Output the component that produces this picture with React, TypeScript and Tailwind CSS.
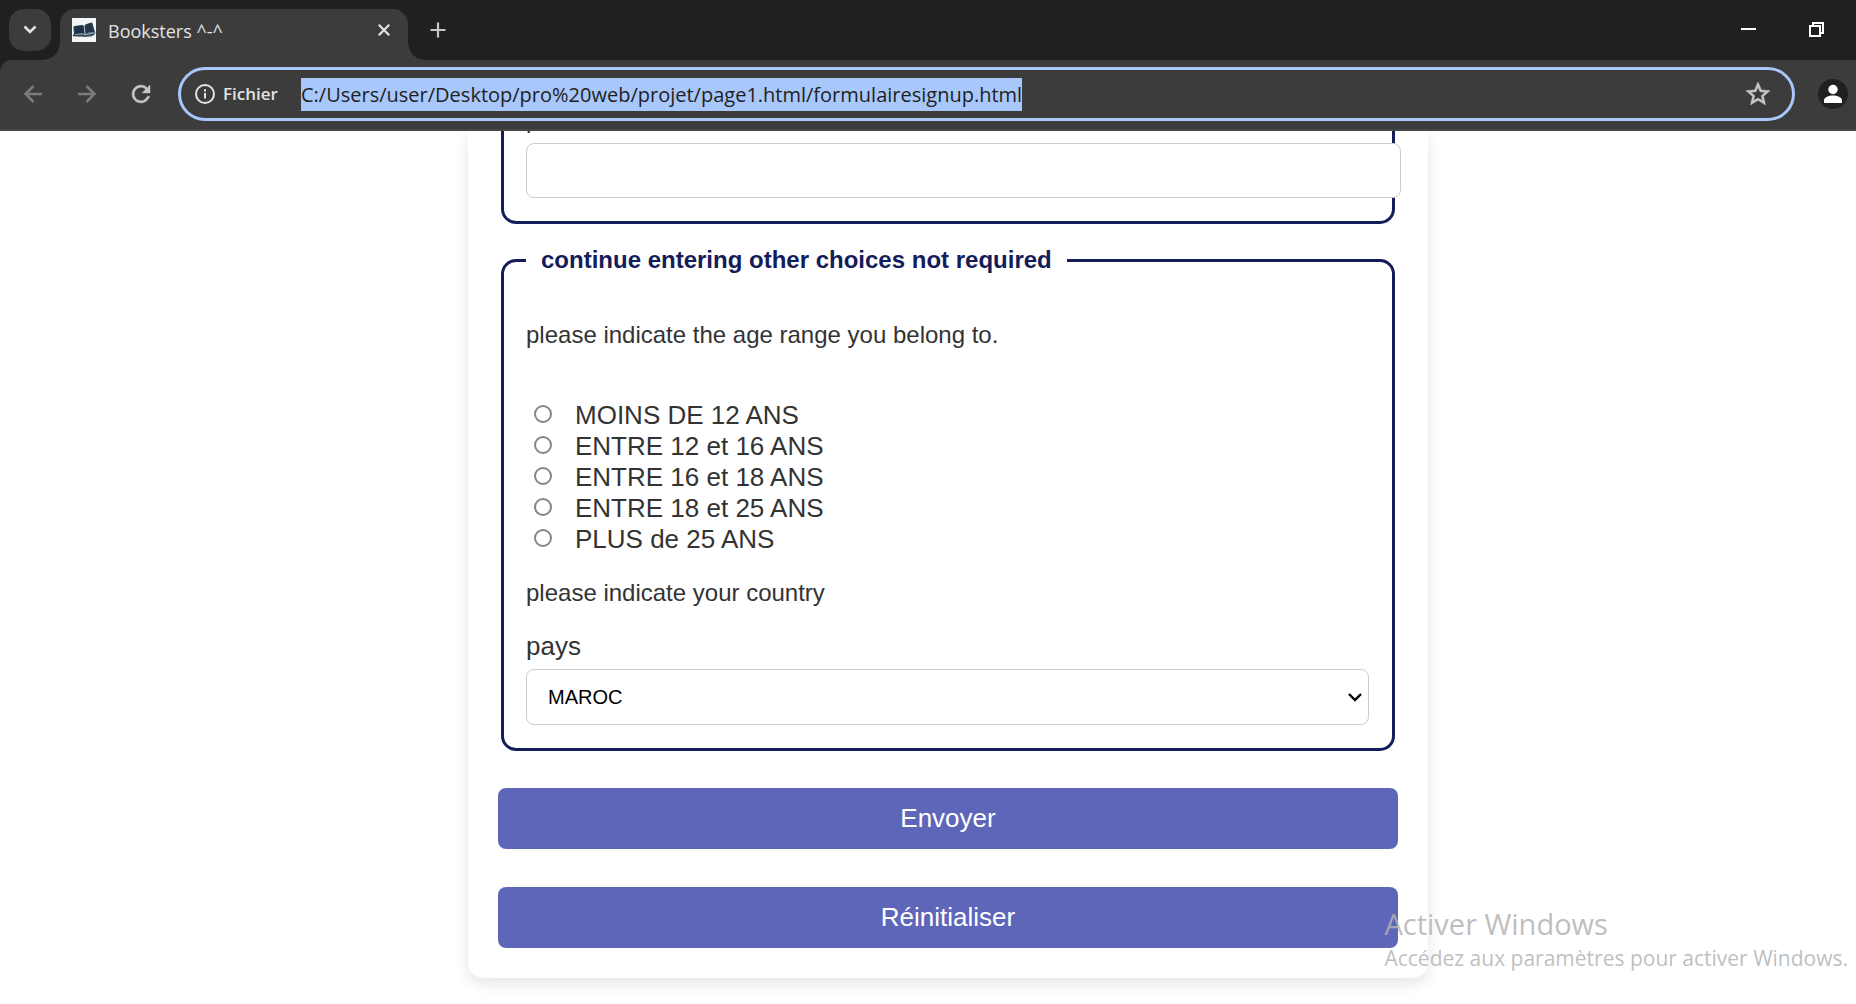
import React from "react";

const ageRanges = [
  "MOINS DE 12 ANS",
  "ENTRE 12 et 16 ANS",
  "ENTRE 16 et 18 ANS",
  "ENTRE 18 et 25 ANS",
  "PLUS de 25 ANS",
];

function BookIcon() {
  return (
    <svg viewBox="0 0 24 24" className="size-6 shrink-0" aria-hidden="true">
      <rect width="24" height="24" fill="#f4f5f6" />
      <path d="M1 8.5 L10 7.5 L12 9 L13 6.5 L20 4.5 L23.5 15 L20 18.5 L12 19 L3 18.5 L0.5 17.5 L2 15.5 Z" fill="#5a6c7a" />
      <path d="M2.5 8 L10.5 7 L12.2 8.5 L12.8 15.5 L10 15 L2 16.5 Z" fill="#1d3244" />
      <path d="M13 8 L15 6 L20 4.5 L22.5 14 L17 14 L13.2 16 Z" fill="#22384a" />
      <path d="M12.3 8.5 L13 16.5" stroke="#c9d2d9" strokeWidth="0.8" />
      <path d="M1 17.5 L10 16.8 L12.8 18 L22.5 16" stroke="#1b2e3e" strokeWidth="1" fill="none" />
      <path d="M3 16.6 L10 15.8 L13 17 L22 14.8" stroke="#cfd6dc" strokeWidth="0.6" fill="none" />
    </svg>
  );
}

function TabStrip() {
  return (
    <header className="flex h-[60px] items-start bg-[#1f2120] pt-[9px] pl-[9px]">
      <button
        type="button"
        aria-label="Search tabs"
        className="flex size-[42px] items-center justify-center rounded-[15px] bg-[#3c3c3c] text-[#e3e3e3]"
      >
        <svg viewBox="0 0 14 10" className="h-[10px] w-[14px]" fill="none" stroke="currentColor" strokeWidth="2.6">
          <path d="M1.5 1.5 L7 7 L12.5 1.5" />
        </svg>
      </button>
      <div className="relative ml-[9px] flex h-[51px] w-[348px] items-center rounded-t-[15px] bg-[#3c3c3c] pr-[18px] pb-[9px] pl-3">
        <span className="absolute bottom-0 -left-4 size-4 bg-[radial-gradient(circle_at_0_0,transparent_15px,#3c3c3c_16px)]" />
        <span className="absolute -right-4 bottom-0 size-4 bg-[radial-gradient(circle_at_100%_0,transparent_15px,#3c3c3c_16px)]" />
        <BookIcon />
        <span className="ml-3 flex-1 pt-[2px] text-[18px] leading-6 text-[#e3e3e3]">Booksters ^-^</span>
        <button type="button" aria-label="Close tab" className="text-[#e3e3e3]">
          <svg viewBox="0 0 12 12" className="size-3" fill="none" stroke="currentColor" strokeWidth="2.2">
            <path d="M0.7 0.7 L11.3 11.3 M11.3 0.7 L0.7 11.3" />
          </svg>
        </button>
      </div>
      <button type="button" aria-label="New tab" className="ml-[22px] flex h-[42px] items-center text-[#c7c7c7]">
        <svg viewBox="0 0 16 16" className="size-4" fill="none" stroke="currentColor" strokeWidth="2.2">
          <path d="M8 0.5 V15.5 M0.5 8 H15.5" />
        </svg>
      </button>
      <div className="mt-[13px] mr-8 ml-auto flex gap-[53px] text-white">
        <button type="button" aria-label="Minimize" className="flex size-[15px] items-center">
          <svg viewBox="0 0 15 15" className="size-[15px]" fill="currentColor">
            <rect y="6" width="15" height="2" />
          </svg>
        </button>
        <button type="button" aria-label="Restore" className="size-[15px]">
          <svg viewBox="0 0 15 15" className="size-[15px]" fill="none" stroke="currentColor" strokeWidth="2">
            <rect x="1" y="4" width="10" height="10" />
            <path d="M4 3 V1 H14 V11 H12" />
          </svg>
        </button>
      </div>
    </header>
  );
}

function Toolbar() {
  return (
    <div className="bg-[#1f2120]">
      <nav className="flex h-[71px] items-center rounded-tl-[12px] border-b-2 border-[#474747] bg-[#3c3c3c] pt-[3px] pr-2 pb-1 pl-6">
        <button type="button" aria-label="Back" className="text-[#7b7b7b]">
          <svg viewBox="0 0 18 18" className="size-[18px]" fill="none" stroke="currentColor" strokeWidth="2.6">
            <path d="M18 9 H2 M9.5 1 L1.5 9 L9.5 17" />
          </svg>
        </button>
        <button type="button" aria-label="Forward" className="ml-9 text-[#7b7b7b]">
          <svg viewBox="0 0 18 18" className="size-[18px]" fill="none" stroke="currentColor" strokeWidth="2.6">
            <path d="M0 9 H16 M8.5 1 L16.5 9 L8.5 17" />
          </svg>
        </button>
        <button type="button" aria-label="Reload" className="ml-9 text-[#c7c7c7]">
          <svg
            viewBox="4 4 16 16"
            className="size-[18px] overflow-visible"
            fill="currentColor"
            stroke="currentColor"
            strokeWidth="0.4"
          >
            <path d="M17.65 6.35A7.95 7.95 0 0 0 12 4a8 8 0 1 0 7.73 10h-2.08A6 6 0 1 1 12 6c1.66 0 3.14.69 4.22 1.78L13 11h7V4z" />
          </svg>
        </button>
        <form className="ml-7 flex h-[54px] min-w-0 flex-1 items-center rounded-full border-[3px] border-[#a8c7fa] pr-[22px] pl-[14px]">
          <svg viewBox="0 0 20 20" className="size-5 shrink-0 text-[#e3e3e3]" fill="none" stroke="currentColor" strokeWidth="2">
            <circle cx="10" cy="10" r="9" />
            <path d="M10 9 V14.5 M10 5.2 V7.4" />
          </svg>
          <label htmlFor="address" className="ml-2 w-[58px] text-[17px] leading-6 font-semibold text-[#e3e3e3]">
            Fichier
          </label>
          <div className="ml-5 min-w-0 flex-1">
            <input
              id="address"
              readOnly
              value="C:/Users/user/Desktop/pro%20web/projet/page1.html/formulairesignup.html"
              className="field-sizing-content h-[33px] max-w-full bg-[#a8c7fa] text-[20px] text-[#1f1f1f] outline-none"
            />
          </div>
          <button type="button" aria-label="Bookmark this page" className="text-[#c7c7c7]">
            <svg viewBox="2 2 20 20" className="size-6 overflow-visible" fill="currentColor" stroke="currentColor" strokeWidth="0.5">
              <path d="M22 9.24l-7.19-.62L12 2 9.19 8.63 2 9.24l5.46 4.73L5.82 21 12 17.27 18.18 21l-1.63-7.03L22 9.24zM12 15.4l-3.76 2.27 1-4.28-3.32-2.88 4.38-.38L12 6.1l1.71 4.04 4.38.38-3.32 2.88 1 4.28L12 15.4z" />
            </svg>
          </button>
        </form>
        <button type="button" aria-label="Profile" className="ml-[23px]">
          <svg viewBox="0 0 30 30" className="size-[30px]">
            <circle cx="15" cy="15" r="15" fill="#1f2120" />
            <circle cx="15" cy="10.5" r="4.7" fill="#fff" />
            <path d="M6 24 V21.5 C6 18 11 16.5 15 16.5 C19 16.5 24 18 24 21.5 V24 Z" fill="#fff" />
          </svg>
        </button>
      </nav>
    </div>
  );
}

function SignupForm() {
  return (
    <form className="w-full max-w-[960px] rounded-b-[15px] bg-white px-[30px] pb-[30px] text-[#333] shadow-[0_6px_15px_rgba(0,0,0,0.1)]">
      <fieldset className="mx-[3px] h-[93px] rounded-b-[15px] border-[3px] border-t-0 border-[#141c59] pr-[23px] pl-[22px]">
        <label htmlFor="password" className="-mt-[25px] block h-[37px] text-[24px] leading-7">
          password
        </label>
        <input
          id="password"
          type="password"
          className="h-[55px] w-[calc(100%+32px)] rounded-[8px] border border-[#ccc] bg-white px-[15px] text-[20px]"
        />
      </fieldset>

      <fieldset className="mx-[3px] mt-[22px] rounded-[15px] border-[3px] border-[#141c59] pr-[23px] pb-[23px] pl-[22px]">
        <legend className="px-[15px] text-[24px] leading-7 font-bold text-[#141c59]">
          continue entering other choices not required
        </legend>
        <p className="mt-[47px] text-[24px] leading-7">please indicate the age range you belong to.</p>
        <div className="mt-[51px] text-[26px] leading-[31px]">
          {ageRanges.map((range) => (
            <label key={range} className="flex items-center">
              <input
                type="radio"
                name="age"
                className="mr-[23px] mb-[3px] ml-2 size-[18px] appearance-none rounded-full border-2 border-[#868686] bg-white"
              />
              {range}
            </label>
          ))}
        </div>
        <p className="mt-6 text-[24px] leading-7">please indicate your country</p>
        <label htmlFor="country" className="mt-6 block text-[26px] leading-[31px]">
          pays
        </label>
        <div className="relative mt-[7px]">
          <select
            id="country"
            className="h-[56px] w-full appearance-none rounded-[8px] border border-[#ccc] bg-white px-[21px] text-[20px] text-black"
          >
            <option>MAROC</option>
          </select>
          <svg
            viewBox="0 0 14 9"
            className="pointer-events-none absolute top-6 right-[7px] h-[9px] w-[14px]"
            fill="none"
            stroke="#000"
            strokeWidth="2.4"
          >
            <path d="M1 1 L7 7 L13 1" />
          </svg>
        </div>
      </fieldset>

      <button type="submit" className="mt-[37px] block h-[61px] w-full rounded-[8px] bg-[#5e66ba] text-[26px] text-white">
        Envoyer
      </button>
      <button type="reset" className="mt-[38px] block h-[61px] w-full rounded-[8px] bg-[#5e66ba] text-[26px] text-white">
        Réinitialiser
      </button>
    </form>
  );
}

export default function App() {
  return (
    <div className="relative flex h-screen flex-col overflow-hidden bg-white font-['Open_Sans',sans-serif]">
      <TabStrip />
      <Toolbar />
      <main className="flex min-h-0 flex-1 items-start justify-center overflow-hidden pl-10 font-['Liberation_Sans',Arial,sans-serif]">
        <SignupForm />
      </main>
      <aside className="pointer-events-none absolute right-2 bottom-[30px] text-[#b3b3b3]/85">
        <p className="text-[29px] leading-9">Activer Windows</p>
        <p className="text-[21px] leading-8">Accédez aux paramètres pour activer Windows.</p>
      </aside>
    </div>
  );
}
